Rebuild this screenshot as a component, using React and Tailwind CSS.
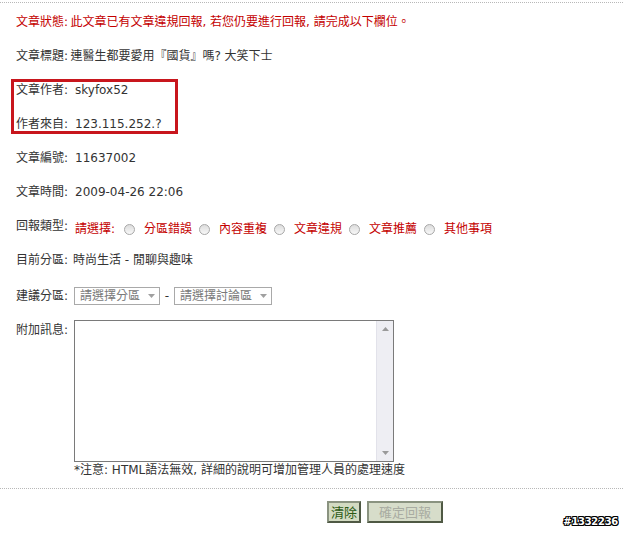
import React from 'react';

const font = { fontFamily: '"DejaVu Sans", "Noto Sans CJK TC", sans-serif' };

const Row = ({ label, children, className = '' }) => (
  <div className={`flex items-center h-[34px] ${className}`}>
    <span className="w-[59px] shrink-0">{label}</span>
    {children}
  </div>
);

const Radio = () => (
  <span className="inline-block w-[11px] h-[11px] rounded-full border border-[#a8a8a8] bg-gradient-to-b from-[#dcdcdc] to-[#f8f8f8] shrink-0" />
);

const FakeSelect = ({ text, width }) => (
  <div
    className={`flex items-center h-[18px] border border-[#a9a9a9] bg-white text-[#7a7a7a] ${width}`}
  >
    <span className="pl-[5px] flex-1 leading-none">{text}</span>
    <span className="w-[14px] h-[14px] mr-[1px] flex items-center justify-center">
      <svg width="7" height="4" viewBox="0 0 7 4">
        <path d="M0 0h7L3.5 4z" fill="#a0a0a0" />
      </svg>
    </span>
  </div>
);

const reportTypes = ['分區錯誤', '內容重複', '文章違規', '文章推薦', '其他事項'];

export default function App() {
  return (
    <div
      className="relative w-[623px] h-[533px] bg-white overflow-hidden text-[12px] text-[#333]"
      style={font}
    >
      <div className="mt-[2px] border-t border-dotted border-[#b8b8b8]" />

      <div className="pl-[16px] mt-[2px]">
        <div className="flex items-center h-[34px] text-[#c40000]">
          文章狀態:&thinsp;此文章已有文章違規回報, 若您仍要進行回報, 請完成以下欄位。
        </div>
        <div className="flex items-center h-[34px]">
          文章標題:&thinsp;連醫生都要愛用『國貨』嗎? 大笑下士
        </div>

        <div className="relative">
          <Row label="文章作者:">skyfox52</Row>
          <Row label="作者來自:">123.115.252.?</Row>
          {/* red highlight annotation */}
          <div className="absolute left-[-5px] top-[6px] w-[167px] h-[55px] border-[3px] border-[#c8161d] pointer-events-none" />
        </div>

        <Row label="文章編號:">11637002</Row>
        <Row label="文章時間:">2009-04-26 22:06</Row>

        <div className="flex items-center h-[34px]">
          <span className="w-[59px] shrink-0">回報類型:</span>
          <div className="flex items-center text-[#c40000] mt-[6px]">
            <span className="w-[49px]">請選擇:</span>
            {reportTypes.map((t) => (
              <span key={t} className="flex items-center">
                <Radio />
                <span className="ml-[9px] mr-[7px]">{t}</span>
              </span>
            ))}
          </div>
        </div>

        <div className="flex items-center h-[34px]">
          <span className="w-[57px] shrink-0">目前分區:</span>
          時尚生活 - 閒聊與趣味
        </div>

        <div className="flex items-center h-[38px]">
          <span className="w-[58px] shrink-0">建議分區:</span>
          <FakeSelect text="請選擇分區" width="w-[86px]" />
          <span className="w-[14px] text-center">-</span>
          <FakeSelect text="請選擇討論區" width="w-[98px]" />
        </div>

        <div className="flex items-start mt-[5px]">
          <span className="w-[58px] shrink-0 pt-[1px]">附加訊息:</span>
          <div>
            <div className="flex w-[320px] h-[142px] border border-[#7a7a7a] bg-white">
              <div className="flex-1" />
              <div className="w-[17px] flex flex-col justify-between items-center bg-[#eeeef3] border-l border-[#e2e2ea] py-[6px]">
                <svg width="7" height="4" viewBox="0 0 7 4">
                  <path d="M0 4h7L3.5 0z" fill="#9a9a9a" />
                </svg>
                <svg width="7" height="4" viewBox="0 0 7 4">
                  <path d="M0 0h7L3.5 4z" fill="#9a9a9a" />
                </svg>
              </div>
            </div>
            <div className="leading-[17px]">
              *注意: HTML語法無效, 詳細的說明可增加管理人員的處理速度
            </div>
          </div>
        </div>
      </div>

      <div className="mt-[9px] border-t border-dotted border-[#b8b8b8]" />

      <div className="flex gap-[6px] pl-[327px] mt-[12px]">
        <button className="h-[22px] w-[34px] border-2 border-t-[#8a9380] border-l-[#8a9380] border-r-[#4f5944] border-b-[#4f5944] bg-[#d3dbc2] text-[#2c5a14] text-[13px] leading-none">
          清除
        </button>
        <button className="h-[22px] w-[76px] border-2 border-t-[#8a9380] border-l-[#8a9380] border-r-[#4f5944] border-b-[#4f5944] bg-[#d7ddca] text-[#a9aca2] text-[13px] leading-none">
          確定回報
        </button>
      </div>

      {/* image id watermark */}
      <div
        className="absolute right-[5px] top-[517px] text-[10px] font-bold text-white leading-none tracking-[-0.3px] [text-shadow:1px_0_0_#000,-1px_0_0_#000,0_1px_0_#000,0_-1px_0_#000,1px_1px_0_#000,-1px_-1px_0_#000,1px_-1px_0_#000,-1px_1px_0_#000]"
      >
        #1332236
      </div>
    </div>
  );
}
